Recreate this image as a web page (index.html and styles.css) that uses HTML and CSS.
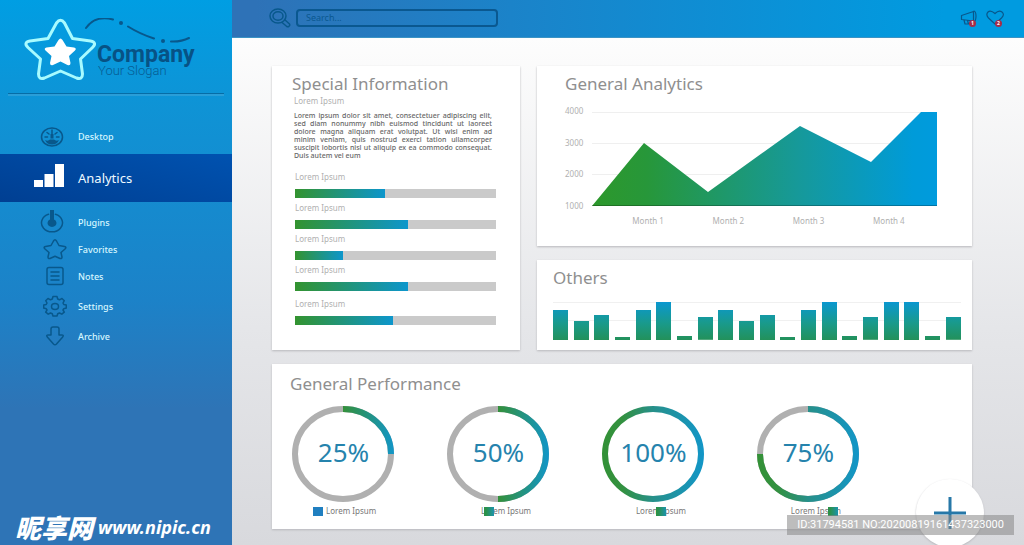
FILE: index.html
```html
<!DOCTYPE html>
<html lang="en">
<head>
<meta charset="utf-8">
<title>Company Analytics</title>
<link rel="stylesheet" href="styles.css">
</head>
<body>
<div class="app">
  <aside class="sidebar">
    <a class="brand" href="#" aria-label="Company home">
      <svg class="brand-star" viewBox="0 0 76 64" aria-hidden="true">
        <path class="star-line" d="M33.500 5q4-5.500 8 0l8 15.500 18 2.500q7 1.500 2 6.500L57.500 41l2 15q0 6-6 4L37.500 53l-16 7q-6 2-6-4l2-15L5 29.500q-5-5 2-6.500l18-2.500z"/>
        <path class="star-fill" d="M35.500 22q2-3 4 0l4 6.500 7.500 1q3 1 1 3l-6 5.500 1.500 7q0 3-3 2l-7-3.500-7.500 3.500q-3 1-3-2l1.500-7-6-5.500q-2-2 1-3l8-1z"/>
      </svg>
      <span class="brand-text">
        <svg class="brand-swoosh" viewBox="0 0 112 28" aria-hidden="true">
          <path d="M2 10Q11-3 29 1.500M44 8.500Q56 16 70 20.500M87 23.500Q97 24 105 20"/>
          <circle cx="37" cy="5" r="2"/><circle cx="79" cy="23" r="2"/>
        </svg>
        <strong class="brand-name">Company</strong>
        <span class="brand-slogan">Your Slogan</span>
      </span>
    </a>
    <nav class="nav">
      <a class="nav-item nav-desktop" href="#">
        <svg class="icon" viewBox="0 0 24 22"><ellipse cx="12" cy="11" rx="10.500" ry="9"/><path d="M5 11h2.500M16.500 11H19M7 6.500l2 1.500M17 6.500L15 8M12 4v7"/><path class="solid" d="M10.500 8h3v4.500h-3zM5 14q3 1.500 5-.5h4q2 2 5 .5-2 4.500-7 4.500T5 14z"/></svg>
        <span>Desktop</span></a>
      <a class="nav-item nav-active" href="#" aria-current="page">
        <svg class="icon-bars" viewBox="0 0 30 23"><path d="M0 16h9v7H0zM10.500 10h9v13h-9zM21 0h9v23h-9z"/></svg>
        <span>Analytics</span></a>
      <a class="nav-item nav-plugins" href="#">
        <svg class="icon" viewBox="0 0 24 24"><path d="M8.500 4.300a10.500 9 0 1 0 7 0"/><path class="solid" d="M10 0h4v9.500a4.500 4 0 1 1-4 0z"/></svg>
        <span>Plugins</span></a>
      <a class="nav-item" href="#">
        <svg class="icon shifted" viewBox="0 0 24 22"><path d="M10.500 3q1.500-2.500 3 0l2.500 4.500 5.500 1q2.500.5.500 2.500l-4 3.500 1 4.500q0 2-2 1.500L12 18.300l-5 2.200q-2 .5-2-1.500l1-4.500L2 11q-2-2 .5-2.500l5.500-1z"/></svg>
        <span>Favorites</span></a>
      <a class="nav-item" href="#">
        <svg class="icon shifted" viewBox="0 0 24 22"><rect x="4" y="2.500" width="16" height="17" rx="2"/><path d="M8 7h8M8 11h8M8 15h8"/></svg>
        <span>Notes</span></a>
      <a class="nav-item nav-spaced" href="#">
        <svg class="icon shifted" viewBox="0 0 24 22"><path d="M10 1.500h4l.7 2.500 1.800.8L19 3.500l2.300 2.200L20 8l.8 1.500 2.500.4v3.200l-2.500.6L20 15l1.300 2.200-2.500 2-2.300-1.200-1.800.8-.7 2.200h-4l-.7-2.200-1.800-.8-2.300 1.200-2.500-2L4 15l-.8-1.300-2.500-.6V9.900l2.500-.4L4 8 2.700 5.700 5 3.500l2.500 1.300L9.300 4z"/><ellipse cx="12" cy="11.500" rx="3.500" ry="3"/></svg>
        <span>Settings</span></a>
      <a class="nav-item nav-spaced" href="#">
        <svg class="icon shifted" viewBox="0 0 24 22"><path d="M10 2h4q2 0 2 2v6h2.500q3 0 1 2.200l-6 6.800q-1.500 1.500-3 0l-6-6.800Q2.500 10 5.500 10H8V4q0-2 2-2z"/></svg>
        <span>Archive</span></a>
    </nav>
    <p class="site-mark"><span class="mark-cjk" lang="zh">昵享网</span><span class="mark-url">www.nipic.cn</span></p>
  </aside>

  <div class="page">
    <header class="topbar">
      <svg class="search-icon" viewBox="0 0 22 20" aria-hidden="true"><ellipse cx="9" cy="8" rx="8" ry="7"/><ellipse cx="9" cy="8" rx="5" ry="4.200"/><path d="M15.500 11.500l5 4.500q.8 1.500-.7 2.500-1 .5-2 0l-5.300-4.500"/></svg>
      <input class="search" type="text" placeholder="Search..." aria-label="Search">
      <button class="alert" type="button" aria-label="Announcements">
        <svg viewBox="0 0 17 15"><path d="M1 5.500L13 1.500v9.500L1 9.500zM13 1q2.500 0 2.500 5t-2 6M3.500 10l1 4h3.500l-1-3.500"/></svg><span class="badge">1</span></button>
      <button class="alert" type="button" aria-label="Likes">
        <svg viewBox="0 0 18 15"><path d="M9 14L2.500 8Q-.5 4.500 2 2t7 1.500Q13-.5 16 2t-.5 6z"/></svg><span class="badge">2</span></button>
    </header>

    <main class="board">
      <section class="card info">
        <h2 class="title">Special Information</h2>
        <h3 class="subtitle">Lorem Ipsum</h3>
        <p class="copy"><span>Lorem ipsum dolor sit amet, consectetuer adipiscing elit,</span> <span>sed diam nonummy nibh euismod tincidunt ut laoreet</span> <span>dolore magna aliquam erat volutpat. Ut wisi enim ad</span> <span>minim veniam, quis nostrud exerci tation ullamcorper</span> <span>suscipit lobortis nisl ut aliquip ex ea commodo consequat.</span> <span class="last">Duis autem vel eum</span></p>
        <ul class="meters">
          <li>Lorem Ipsum<div class="track"><div class="fill" style="width:45%"></div></div></li>
          <li>Lorem Ipsum<div class="track"><div class="fill" style="width:56%"></div></div></li>
          <li>Lorem Ipsum<div class="track"><div class="fill" style="width:24%"></div></div></li>
          <li>Lorem Ipsum<div class="track"><div class="fill" style="width:56%"></div></div></li>
          <li>Lorem Ipsum<div class="track"><div class="fill" style="width:49%"></div></div></li>
        </ul>
      </section>

      <section class="card analytics">
        <h2 class="title">General Analytics</h2>
        <div class="chart">
          <div class="y-axis"><span>4000</span><span>3000</span><span>2000</span><span>1000</span></div>
          <svg class="area" viewBox="0 0 345 94" preserveAspectRatio="none" role="img" aria-label="Monthly values">
            <defs><linearGradient id="sweep"><stop offset="0" stop-color="#2d982b"/><stop offset=".16" stop-color="#27973a"/><stop offset=".6" stop-color="#16999a"/><stop offset=".93" stop-color="#009bd9"/><stop offset="1" stop-color="#009bdd"/></linearGradient></defs>
            <path class="grid-line" d="M0 .5h345M0 31.500h345M0 62.500h345"/>
            <path fill="url(#sweep)" d="M0 94L52 31l64 49 92-66 71 36L329 0h16v94z"/>
            <path class="grid-shade" d="M0 93.500h345"/>
          </svg>
          <div class="x-axis"><span>Month 1</span><span>Month 2</span><span>Month 3</span><span>Month 4</span></div>
        </div>
      </section>

      <section class="card others">
        <h2 class="title">Others</h2>
        <div class="columns" role="img" aria-label="Other values">
          <i style="height:80%"></i><i style="height:51%"></i><i style="height:66%"></i><i style="height:8%"></i><i style="height:80%"></i>
          <i style="height:100%"></i><i style="height:11%"></i><i style="height:60%"></i><i style="height:80%"></i><i style="height:51%"></i>
          <i style="height:66%"></i><i style="height:8%"></i><i style="height:80%"></i><i style="height:100%"></i><i style="height:11%"></i>
          <i style="height:60%"></i><i style="height:100%"></i><i style="height:100%"></i><i style="height:11%"></i><i style="height:60%"></i>
        </div>
      </section>

      <section class="card performance">
        <h2 class="title">General Performance</h2>
        <div class="rings">
          <figure class="ring">
            <svg viewBox="0 0 102 96"><defs>
              <linearGradient id="right" gradientUnits="userSpaceOnUse" x1="51" y1="0" x2="102" y2="0"><stop offset="0" stop-color="#34903a"/><stop offset="1" stop-color="#1296c8"/></linearGradient>
              <linearGradient id="full" gradientUnits="userSpaceOnUse" x1="0" y1="0" x2="102" y2="0"><stop offset="0" stop-color="#339136"/><stop offset=".2" stop-color="#339140"/><stop offset=".5" stop-color="#27908a"/><stop offset="1" stop-color="#1296c8"/></linearGradient></defs>
              <ellipse class="rail" cx="51" cy="48" rx="48" ry="45"/><path stroke="url(#right)" d="M51 3A48 45 0 0 1 99 48"/></svg>
            <b>25%</b><figcaption>Lorem Ipsum<i class="key key-a"></i></figcaption>
          </figure>
          <figure class="ring">
            <svg viewBox="0 0 102 96"><ellipse class="rail" cx="51" cy="48" rx="48" ry="45"/><path stroke="url(#right)" d="M51 3A48 45 0 0 1 51 93"/></svg>
            <b>50%</b><figcaption>Lorem Ipsum<i class="key key-b"></i></figcaption>
          </figure>
          <figure class="ring">
            <svg viewBox="0 0 102 96"><ellipse stroke="url(#full)" cx="51" cy="48" rx="48" ry="45"/></svg>
            <b>100%</b><figcaption>Lorem Ipsum<i class="key key-c"></i></figcaption>
          </figure>
          <figure class="ring">
            <svg viewBox="0 0 102 96"><ellipse class="rail" cx="51" cy="48" rx="48" ry="45"/><path stroke="url(#full)" d="M51 3A48 45 0 1 1 3 48"/></svg>
            <b>75%</b><figcaption>Lorem Ipsum<i class="key key-d"></i></figcaption>
          </figure>
        </div>
      </section>
    </main>
    <button class="add" type="button" aria-label="Add"><svg viewBox="0 0 32 32"><path d="M16 0v32M0 16h32"/></svg></button>
    <p class="image-id">ID:31794581 NO:20200819161437323000</p>
  </div>
</div>
</body>
</html>
```
FILE: styles.css
```css
* { box-sizing: border-box; }
body { margin: 0; font-family: "Noto Sans", "Open Sans", sans-serif; color: #8f8f8f; }
h2, h3, p, ul, figure { margin: 0; padding: 0; font-weight: 400; }
a { color: inherit; text-decoration: none; }
button { padding: 0; border: 0; background: none; }
svg { display: block; }

.app { display: grid; grid-template-columns: 232px 1fr; min-height: 100vh; }

/* Sidebar */
.sidebar { display: flex; flex-direction: column; background: linear-gradient(#009ee3 0, #0f93d5 20%, #1c82c8 55%, #2e74b6 75%); }
.brand { display: flex; height: 94px; margin: 0 8px; padding: 18px 0 0 15px; border-bottom: 1px solid #066da6; box-shadow: 0 2px 0 #2a9ed8; }
.brand-star { width: 76px; height: 64px; }
.star-line { fill: none; stroke: #a8fbff; stroke-width: 3; stroke-linejoin: round; }
.star-fill { fill: #fff; }
.brand-text { display: flex; flex-direction: column; margin-left: -15px; font-family: Roboto, sans-serif; }
.brand-swoosh { width: 112px; height: 28px; fill: #08588c; }
.brand-swoosh path { fill: none; stroke: #08588c; stroke-width: 2; stroke-linecap: round; }
.brand-name { margin-left: 13px; font-size: 23px; line-height: 18px; font-weight: 700; color: #075285; }
.brand-slogan { margin-left: 14px; font-size: 13px; line-height: 14px; font-weight: 300; color: #075c92; }

.nav { padding-top: 26px; font-size: 9px; font-weight: 500; color: #d5f6ff; }
.nav-item { display: flex; align-items: center; height: 27px; padding: 0 0 1px 40px; }
.icon { width: 24px; height: 22px; margin-right: 14px; fill: none; stroke: #08588c; stroke-width: 1.5; stroke-linejoin: round; stroke-linecap: round; }
.icon .solid { fill: #08588c; stroke: none; }
.shifted { margin: 0 11px 0 3px; }
.nav-desktop { height: 34px; }
.nav-active { height: 48px; padding-left: 34px; font-size: 13px; font-weight: 400; color: #eef9ff; background: linear-gradient(15deg, #003f92, #0052b0); }
.icon-bars { width: 30px; height: 23px; margin: 0 14px 4px 0; fill: #fff; }
.nav-plugins { margin-top: 7px; }
.nav-plugins .icon { height: 24px; }
.nav-spaced { margin-top: 3px; }

.site-mark { display: flex; align-items: center; gap: 5px; margin-top: auto; padding: 0 0 4px 15px; color: #fff; font-style: italic; font-weight: 700; }
.mark-cjk { font: italic 900 26px/28px "Noto Sans CJK SC", sans-serif; }
.mark-url { font-size: 18px; line-height: 28px; }

/* Page */
.page { position: relative; overflow: hidden; background: linear-gradient(#fdfdfd 7%, #e5e6e9 60%, #d8d9dd); }
.topbar { display: flex; align-items: center; height: 38px; padding: 0 20px 2px 37px; background: linear-gradient(90deg, #2e72b7 3%, #1c82c8 33%, #009be0 90%); border-bottom: 1px solid #3b93c4; }
.search-icon { width: 22px; height: 20px; fill: none; stroke: #08588c; stroke-width: 1.5; stroke-linejoin: round; }
.search { width: 202px; height: 18px; margin: 0 auto 0 5px; padding: 0 8px; border: 2px solid #0a5890; border-radius: 4px; background: transparent; font: 9px "Noto Sans", sans-serif; color: #0a5890; }
.search::placeholder { color: #0a5890; opacity: 1; }
.alert { position: relative; margin-left: 8px; }
.alert svg { width: 18px; height: 15px; fill: none; stroke: #08588c; stroke-width: 1.2; stroke-linejoin: round; }
.badge { position: absolute; right: 2px; bottom: -2px; width: 7px; height: 7px; border-radius: 50%; background: #a52c48; color: #fff; font: 700 5px/7px "Noto Sans", sans-serif; }

.board { display: grid; grid-template-columns: 248fr 435fr; gap: 14px 17px; padding: 28px 52px 16px 40px; }
.card { background: #fff; box-shadow: 0 1px 2px #b8b8bc; }
.title { font-size: 17px; line-height: 20px; color: #8f8f8f; }

.info { grid-row: span 2; min-height: 284px; padding: 8px 24px 16px 20px; }
.subtitle { padding-left: 2px; font-size: 8px; line-height: 14px; color: #b0b0b0; }
.copy { padding: 4px 4px 0 2px; font-size: 7px; line-height: 8px; font-weight: 500; color: #666; text-align: justify; }
.copy span { display: block; text-align-last: justify; }
.copy .last { text-align-last: left; }
.meters { padding: 12px 0 0 3px; list-style: none; font-size: 8px; line-height: 10px; color: #b0b0b0; }
.meters li { height: 31px; }
.meters li:last-child { margin-top: 3px; }
.track { height: 9px; margin-top: 7px; background: #cacaca; }
.fill { height: 100%; background: linear-gradient(90deg, #33932f, #0d96cc); }

.analytics { min-height: 180px; padding: 8px 35px 16px 28px; }
.chart { display: grid; grid-template-columns: 27px 1fr; margin-top: 18px; font-size: 8px; line-height: 10px; color: #b0b0b0; }
.y-axis { display: flex; flex-direction: column; justify-content: space-between; margin: -6px 0 -5px; }
.area { width: 100%; height: 94px; }
.grid-line { stroke: #efefef; }
.grid-shade { stroke: #00000040; }
.x-axis { grid-column: 2; display: grid; grid-template-columns: repeat(4, 1fr); margin-top: 10px; padding: 0 8px 0 16px; text-align: center; }

.others { min-height: 90px; padding: 8px 11px 10px 16px; }
.columns { display: flex; align-items: flex-end; justify-content: space-between; height: 38px; margin-top: 14px; background: linear-gradient(#f0f0f0 1px, #fff 1px 18px, #f0f0f0 18px 19px, #fff 19px); }
.columns i { width: 15px; background: linear-gradient(#0a97d0, #199a8c 55%, #23915a) bottom / 100% 38px; }

.performance { grid-column: 1 / -1; min-height: 165px; padding: 10px 18px 6px; }
.rings { display: grid; grid-template-columns: repeat(4, 102px); column-gap: 8%; margin-top: 12px; padding-left: 2px; }
.ring { position: relative; }
.ring svg { width: 102px; height: 96px; fill: none; stroke-width: 6; }
.rail { stroke: #b0b0b0; }
.ring b { position: absolute; inset: 0 0 auto 1px; font-size: 26px; line-height: 92px; font-weight: 400; text-align: center; color: #2583ad; }
.ring figcaption { position: relative; padding-left: 34px; font-size: 8px; line-height: 18px; color: #777; }
.key { position: absolute; top: 5px; width: 10px; height: 9px; background: linear-gradient(90deg, #2b9148 20%, #1c93ad); }
.key-a { left: 21px; background: #207fc0; }
.key-b { left: 37px; }
.key-c { left: 54px; }
.key-d { left: 71px; }

.add { position: absolute; right: 40px; bottom: -2px; display: grid; place-items: center; width: 68px; height: 68px; border-radius: 50%; background: #fff; box-shadow: 0 1px 2px #b8b8bc; }
.add svg { width: 32px; height: 32px; fill: none; stroke: #2778a8; stroke-width: 3; }
.image-id { position: absolute; right: 10px; bottom: 10px; padding: 0 10px; background: rgba(135, 135, 135, .55); font: 11px/20px Roboto, sans-serif; color: #fff; }
```
